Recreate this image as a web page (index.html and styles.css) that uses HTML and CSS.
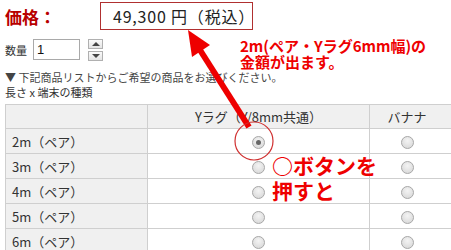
FILE: index.html
```html
<!DOCTYPE html>
<html lang="ja">
<head>
<meta charset="utf-8">
<link rel="stylesheet" href="styles.css">
</head>
<body>
<div class="page">
  <div class="price-row">
    <span class="price-label">価格：</span>
    <span class="price-box">49,300 円（税込）</span>
  </div>
  <div class="qty-row">
    <span class="qty-label">数量</span>
    <span class="qty-input">1</span>
    <span class="spinner">
      <span class="spin up"><span class="tri-up"></span></span>
      <span class="spin down"><span class="tri-down"></span></span>
    </span>
  </div>
  <p class="note">▼ 下記商品リストからご希望の商品をお選びください。</p>
  <p class="caption">長さ x 端末の種類</p>
  <table class="grid">
    <thead>
      <tr><th class="c1"></th><th class="c2">Yラグ（Y/8mm共通）</th><th class="c3">バナナ</th></tr>
    </thead>
    <tbody>
      <tr><td class="c1">2m（ペア）</td><td class="c2"><span class="radio on"></span></td><td class="c3"><span class="radio"></span></td></tr>
      <tr><td class="c1">3m（ペア）</td><td class="c2"><span class="radio"></span></td><td class="c3"><span class="radio"></span></td></tr>
      <tr><td class="c1">4m（ペア）</td><td class="c2"><span class="radio"></span></td><td class="c3"><span class="radio"></span></td></tr>
      <tr><td class="c1">5m（ペア）</td><td class="c2"><span class="radio"></span></td><td class="c3"><span class="radio"></span></td></tr>
      <tr><td class="c1">6m（ペア）</td><td class="c2"><span class="radio"></span></td><td class="c3"><span class="radio"></span></td></tr>
    </tbody>
  </table>

  <svg class="arrow" width="451" height="250" viewBox="0 0 451 250">
    <line x1="249" y1="127" x2="200" y2="50" stroke="#ee0000" stroke-width="6"/>
    <polygon points="188,30 210,45 192,57" fill="#ee0000"/>
    <circle cx="254" cy="141" r="19" fill="none" stroke="#d03030" stroke-width="1.2"/>
  </svg>
  <div class="anno anno-top">2m(ペア・Yラグ6mm幅)の<br>金額が出ます。</div>
  <div class="anno anno-btn">○ボタンを<br>押すと</div>
</div>
</body>
</html>
```
FILE: styles.css
```css
* { box-sizing: border-box; }
html, body { margin: 0; padding: 0; background: #fff; }
body { font-family: "Noto Sans CJK JP", "Noto Sans", sans-serif; color: #333; overflow: hidden; }
.page { position: relative; width: 451px; height: 250px; padding: 2px 0 0 5px; }

.price-row { display: flex; align-items: center; height: 28px; }
.price-label { width: 95px; font-size: 17px; font-weight: bold; color: #b80000; line-height: 1; }
.price-box { height: 28px; width: 153px; border: 1px solid #b03030; font-size: 16px; line-height: 26px; padding-left: 12px; color: #222; letter-spacing: 0.8px; white-space: nowrap; }

.qty-row { display: flex; align-items: center; margin-top: 9px; height: 21px; }
.qty-label { font-size: 11px; color: #333; width: 28px; }
.qty-input { width: 47px; height: 21px; border: 1px solid #a9a9a9; font-size: 13px; line-height: 19px; padding-left: 3px; color: #111; font-family: "Liberation Sans", sans-serif; }
.spinner { display: flex; flex-direction: column; gap: 2px; margin-left: 8px; }
.spin { width: 15px; height: 10px; border: 1px solid #b0b0b0; background: linear-gradient(#fafafa, #e4e4e4); display: flex; align-items: center; justify-content: center; }
.tri-up { width: 0; height: 0; border-left: 4px solid transparent; border-right: 4px solid transparent; border-bottom: 4px solid #444; }
.tri-down { width: 0; height: 0; border-left: 4px solid transparent; border-right: 4px solid transparent; border-top: 4px solid #444; }

.note { margin: 10px 0 0; font-size: 11px; line-height: 14px; color: #444; }
.caption { margin: 1px 0 0; font-size: 11px; line-height: 14px; color: #333; }

.grid { border-collapse: collapse; margin-top: 5px; width: 460px; table-layout: fixed; font-size: 13px; }
.grid th, .grid td { border: 1px solid #cfcfcf; height: 25px; padding: 0; }
.grid th { background: #f0f0f0; font-weight: normal; height: 24px; color: #333; }
.grid td.c1 { background: #f0f0f0; padding-left: 6px; color: #333; }
.grid .c1 { width: 142px; }
.grid .c2 { width: 222px; text-align: center; }
.grid th.c3, .grid td.c3 { text-align: center; padding-right: 20px; }

.radio { display: inline-block; width: 13px; height: 13px; border-radius: 50%; border: 1px solid #a8a8a8; background: radial-gradient(circle at 50% 35%, #f4f4f4, #d4d4d4); vertical-align: middle; position: relative; }
.radio.on::after { content: ""; position: absolute; left: 3px; top: 3px; width: 5px; height: 5px; border-radius: 50%; background: #666; }

.arrow { position: absolute; left: 0; top: 0; pointer-events: none; }
.anno { position: absolute; color: #ee0000; font-weight: bold; }
.anno-top { left: 240px; top: 38px; font-size: 15px; line-height: 16px; }
.anno-btn { left: 272px; top: 153px; font-size: 21px; line-height: 25px; }
```
